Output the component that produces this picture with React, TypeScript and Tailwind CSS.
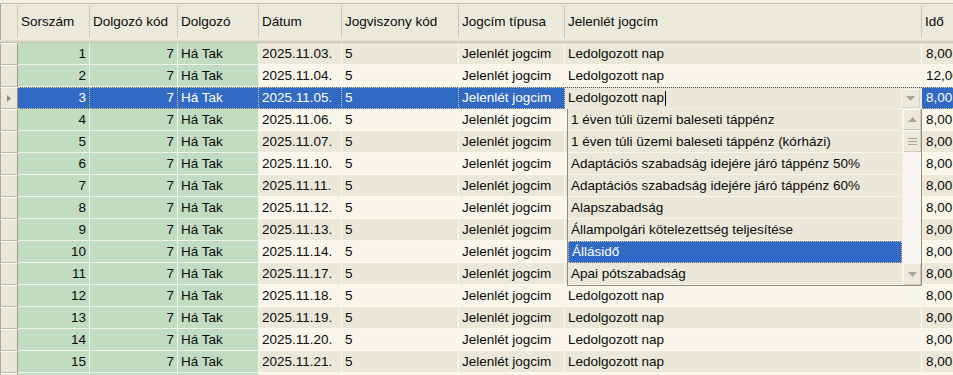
import React from 'react';

type Col = { label: string; w: string; hw: string; align: 'left' | 'right'; green?: boolean };

const cols: Col[] = [
  { label: 'Sorszám', w: 'w-[72px]', hw: 'w-[72px]', align: 'right', green: true },
  { label: 'Dolgozó kód', w: 'w-[88px]', hw: 'w-[88px]', align: 'right', green: true },
  { label: 'Dolgozó', w: 'w-[81px]', hw: 'w-[81px]', align: 'left', green: true },
  { label: 'Dátum', w: 'w-[83px]', hw: 'w-[83px]', align: 'left' },
  { label: 'Jogviszony kód', w: 'w-[117px]', hw: 'w-[117px]', align: 'left' },
  { label: 'Jogcím típusa', w: 'w-[106px]', hw: 'w-[106px]', align: 'left' },
  { label: 'Jelenlét jogcím', w: 'w-[357px]', hw: 'w-[357px]', align: 'left' },
];

const dates = ['03', '04', '05', '06', '07', '10', '11', '12', '13', '14', '17', '18', '19', '20', '21', '24'];

const rows = dates.map((d, i) => ({
  nr: String(i + 1),
  kod: '7',
  nev: 'Há Tak',
  datum: `2025.11.${d}.`,
  jogv: '5',
  tipus: 'Jelenlét jogcim',
  jogcim: 'Ledolgozott nap',
  ido: i === 1 ? '12,00' : '8,00',
}));

const listItems = [
  '1 éven túli üzemi baleseti táppénz',
  '1 éven túli üzemi baleseti táppénz (kórházi)',
  'Adaptációs szabadság idejére járó táppénz 50%',
  'Adaptációs szabadság idejére járó táppénz 60%',
  'Alapszabadság',
  'Állampolgári kötelezettség teljesítése',
  'Állásidő',
  'Apai pótszabadság',
];

const SEL = 2;
const SEL_ITEM = 6;

// kis szürke háromszög a görgetősávhoz / legördülőhöz
const Tri = ({ dir }: { dir: 'up' | 'down' }) => (
  <svg width="9" height="5" viewBox="0 0 9 5">
    <polygon points={dir === 'up' ? '0,5 9,5 4.5,0' : '0,0 9,0 4.5,5'} fill="#a8a597" />
  </svg>
);

function Indicator({ active }: { active?: boolean }) {
  return (
    <div className="w-[18px] h-[22px] shrink-0 flex items-center justify-center bg-[#ebe8d9] border-l border-l-[#a9a595] border-t border-t-[#fbfaf5] border-b border-b-[#c2beab] border-r border-r-[#9c9887]">
      {active && (
        <svg width="4" height="7" viewBox="0 0 4 7">
          <polygon points="0,0 4,3.5 0,7" fill="#8d8a7d" />
        </svg>
      )}
    </div>
  );
}

function Cell({
  col, text, bg, selected,
}: { col: Col; text: string; bg: string; selected: boolean }) {
  const base = 'h-[22px] shrink-0 flex items-center px-[3px] whitespace-nowrap overflow-hidden';
  const align = col.align === 'right' ? 'justify-end' : 'justify-start';
  if (selected) {
    return (
      <div className={`${base} ${align} ${col.w} bg-[#316ac5] text-white border-y border-r border-dotted border-[#dcc487]`}>
        {text}
      </div>
    );
  }
  const color = col.green
    ? 'bg-[#c1dcc1] border-r border-b border-[#eef2e7]'
    : `${bg} border-r border-b border-[#faf8f1]`;
  return <div className={`${base} ${align} ${col.w} ${color}`}>{text}</div>;
}

function Row({ r, i }: { r: (typeof rows)[number]; i: number }) {
  const selected = i === SEL;
  const bg = i % 2 === 0 ? 'bg-[#ebe7d9]' : 'bg-[#f8f5eb]';
  const vals = [r.nr, r.kod, r.nev, r.datum, r.jogv, r.tipus];
  return (
    <div className="flex">
      <Indicator active={selected} />
      {vals.map((v, k) => (
        <Cell key={k} col={cols[k]} text={v} bg={bg} selected={selected} />
      ))}
      {selected ? (
        <div className="w-[357px] h-[22px] shrink-0 flex items-center pl-[3px] bg-[#ebe8da] border-t border-dotted border-[#4a4a4a] border-b border-b-[#faf8f1]">
          <span>{r.jogcim}</span>
          <span className="w-px h-[15px] bg-black ml-px" />
          <div className="ml-auto mr-[2px] w-[19px] h-[19px] flex items-center justify-center bg-[#ece9dc] border border-[#f7f5ee] border-r-[#d6d2c2] border-b-[#d6d2c2]">
            <Tri dir="down" />
          </div>
        </div>
      ) : (
        <Cell col={cols[6]} text={r.jogcim} bg={bg} selected={false} />
      )}
      <div
        className={`flex-1 h-[22px] flex items-center pl-[4px] whitespace-nowrap overflow-hidden ${
          selected ? 'bg-[#316ac5] text-white border-y border-dotted border-[#dcc487]' : `${bg} border-b border-[#faf8f1]`
        }`}
      >
        {r.ido}
      </div>
    </div>
  );
}

function Header() {
  return (
    <div className="flex flex-col h-[43px] shrink-0">
      <div className="h-[3px] bg-[#f2f0e7]" />
      <div className="h-px bg-[#c3bfae]" />
      <div className="flex h-[36px] bg-[#ebe9da]">
        <div className="w-[18px] shrink-0 flex border-l border-[#a9a595]">
          <div className="flex-1" />
          <div className="w-px my-[2px] bg-[#cbc7b4]" />
        </div>
        {cols.map((c) => (
          <div key={c.label} className={`${c.hw} shrink-0 flex`}>
            <div className="flex-1 flex items-center pl-[3px] whitespace-nowrap overflow-hidden">{c.label}</div>
            <div className="w-px my-[2px] bg-[#cbc7b4]" />
          </div>
        ))}
        <div className="flex-1 flex items-center pl-[3px] whitespace-nowrap overflow-hidden">Idő</div>
      </div>
      <div className="h-px bg-[#e3e0d0]" />
      <div className="h-px bg-[#d8d4c3]" />
      <div className="h-px bg-[#c7c3b1]" />
    </div>
  );
}

function DropList() {
  return (
    <div className="absolute left-[567px] top-[109px] w-[355px] h-[177px] flex bg-[#ebe8da] border-x border-b border-[#8f8c7e]">
      <div className="flex-1 flex flex-col">
        {listItems.map((t, k) => (
          <div
            key={t}
            className={`h-[22px] shrink-0 flex items-center pl-[3px] whitespace-nowrap ${
              k === SEL_ITEM
                ? 'bg-[#316ac5] text-white border border-dotted border-[#dcc487]'
                : 'bg-[#ebe8da] border-b border-[#f6f4ec]'
            }`}
          >
            {t}
          </div>
        ))}
      </div>
      <div className="w-[19px] shrink-0 flex flex-col bg-[#f7f6f1] border-l border-[#f2f0e8]">
        <div className="h-[21px] flex items-center justify-center bg-[#ece9dc] border border-[#f9f8f3] border-r-[#cfcbbb] border-b-[#cfcbbb]">
          <Tri dir="up" />
        </div>
        <div className="h-[22px] flex flex-col items-center justify-center gap-[2px] bg-[#ece9dc] border border-[#f9f8f3] border-r-[#cfcbbb] border-b-[#cfcbbb]">
          <span className="w-[9px] h-px bg-[#a8a597]" />
          <span className="w-[9px] h-px bg-[#a8a597]" />
          <span className="w-[9px] h-px bg-[#a8a597]" />
        </div>
        <div className="flex-1" />
        <div className="h-[22px] flex items-center justify-center bg-[#ece9dc] border border-[#f9f8f3] border-r-[#cfcbbb] border-b-[#cfcbbb]">
          <Tri dir="down" />
        </div>
      </div>
    </div>
  );
}

export default function App() {
  return (
    <div className="relative w-[953px] h-[375px] overflow-hidden bg-[#f1efe6] text-[13.5px] leading-none text-[#0a0a0a] font-['Liberation_Sans',Arial,sans-serif]">
      <div className="flex flex-col">
        <Header />
        {rows.map((r, i) => (
          <Row key={r.nr} r={r} i={i} />
        ))}
      </div>
      <DropList />
    </div>
  );
}
